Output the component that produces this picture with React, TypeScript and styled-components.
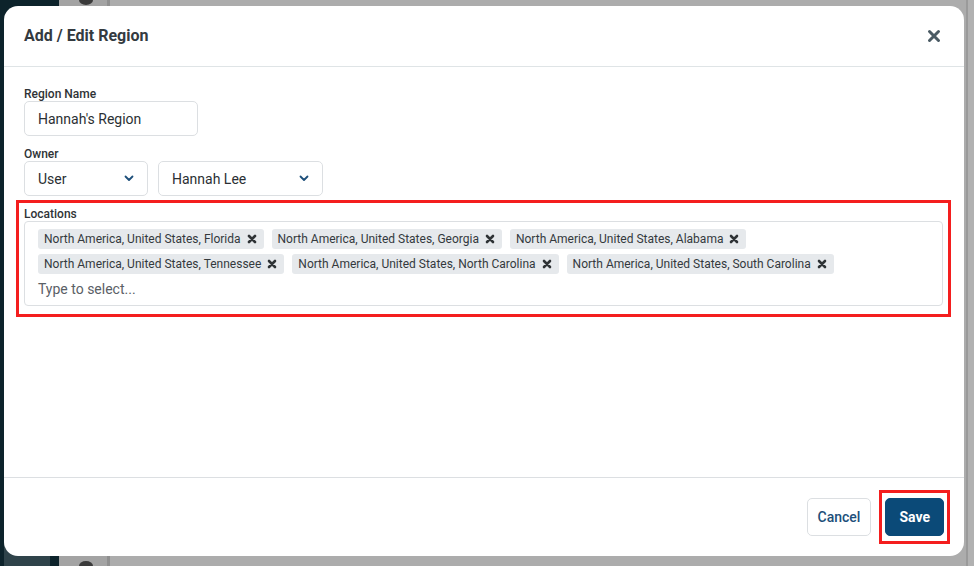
import React from "react";
import styled, { createGlobalStyle } from "styled-components";

const GlobalStyle = createGlobalStyle`
  html, body { margin: 0; padding: 0; }
  body { font-family: Roboto, "Liberation Sans", Arial, sans-serif; -webkit-font-smoothing: antialiased; }
  * { box-sizing: border-box; }
`;

const Page = styled.div`
  position: relative;
  width: 974px;
  height: 566px;
  overflow: hidden;
  display: flex;
`;

const Sidebar = styled.div`
  width: 59px;
  background: #0d232b;
  display: flex;
  flex-direction: column;
  justify-content: flex-end;
`;

const SidebarItem = styled.div`
  margin-left: 4px;
  width: 46px;
  height: 30px;
  background: #2f434a;
`;

const Rail = styled.div`
  width: 48px;
  background: #a3a3a3;
  display: flex;
  flex-direction: column;
  justify-content: space-between;
  align-items: center;
  padding-left: 6px;
`;

const RailDot = styled.div`
  width: 14px;
  height: 10px;
  border-radius: 50%;
  background: #3a3a3a;
  margin: -5px 0;
`;

const Divider = styled.div<{ $w: number; $c: string }>`
  width: ${(p) => p.$w}px;
  background: ${(p) => p.$c};
`;

const Main = styled.div`
  flex: 1;
  background: #acacac;
`;

const Modal = styled.div`
  position: absolute;
  left: 4px;
  top: 6px;
  width: 960px;
  height: 550px;
  background: #fff;
  border-radius: 14px;
  display: flex;
  flex-direction: column;
  overflow: hidden;
`;

const Header = styled.div`
  height: 61px;
  flex-shrink: 0;
  display: flex;
  align-items: center;
  justify-content: space-between;
  padding: 0 22px 0 20px;
  border-bottom: 1px solid #dfe4e6;
`;

const Title = styled.h2`
  margin: -1px 0 0 0;
  font-size: 16px;
  font-weight: 700;
  color: #343a3f;
  line-height: 20px;
`;

const CloseButton = styled.button`
  border: 0;
  background: none;
  padding: 0;
  width: 16px;
  height: 16px;
  display: flex;
  align-items: center;
  justify-content: center;
  cursor: pointer;
`;

const Body = styled.div`
  flex: 1;
  padding: 20px 21px 0 20px;
  display: flex;
  flex-direction: column;
`;

const Label = styled.label`
  display: block;
  font-size: 12px;
  line-height: 14px;
  font-weight: 500;
  color: #2f3336;
`;

const Field = styled.div<{ $mt?: number }>`
  margin-top: ${(p) => p.$mt ?? 0}px;
  display: flex;
  flex-direction: column;
`;

const TextInput = styled.div`
  width: 174px;
  height: 35px;
  border: 1px solid #dcdfe2;
  border-radius: 5px;
  display: flex;
  align-items: center;
  padding-left: 13px;
  font-size: 14px;
  color: #2b2f33;
`;

const Row = styled.div`
  display: flex;
  gap: 10px;
`;

const Select = styled.div<{ $w: number }>`
  width: ${(p) => p.$w}px;
  height: 35px;
  border: 1px solid #dcdfe2;
  border-radius: 5px;
  display: flex;
  align-items: center;
  justify-content: space-between;
  padding: 0 13px 0 13px;
  font-size: 14px;
  color: #2b2f33;
`;

const Highlight = styled.div<{ $mt?: number }>`
  margin-top: ${(p) => p.$mt ?? 0}px;
  border: 3px solid #f41e1e;
  margin-left: -8px;
  margin-right: -8px;
  padding: 4px 5px 8px 5px;
`;

const TagBox = styled.div`
  border: 1px solid #dcdfe2;
  border-radius: 4px;
  padding: 7px 13px 6px 13px;
  display: flex;
  flex-direction: column;
`;

const TagList = styled.div`
  display: flex;
  flex-wrap: wrap;
  gap: 5px 8px;
`;

const Tag = styled.span`
  height: 20px;
  display: inline-flex;
  align-items: center;
  gap: 6px;
  padding: 0 7px 0 6px;
  background: #e6e9ec;
  border-radius: 3px;
  font-size: 12px;
  color: #34393d;
  white-space: nowrap;
`;

const Placeholder = styled.div`
  height: 20px;
  margin-top: 5px;
  display: flex;
  align-items: center;
  font-size: 14px;
  color: #5a6066;
`;

const Footer = styled.div`
  height: 79px;
  flex-shrink: 0;
  border-top: 1px solid #dcdfe2;
  display: flex;
  align-items: center;
  justify-content: flex-end;
  gap: 8px;
  padding-right: 14px;
`;

const Button = styled.button<{ $primary?: boolean }>`
  height: 38px;
  border-radius: 5px;
  font-family: inherit;
  font-size: 14px;
  cursor: pointer;
  border: 1px solid ${(p) => (p.$primary ? "#0b4a78" : "#dcdfe2")};
  background: ${(p) => (p.$primary ? "#0b4a78" : "#fff")};
  color: ${(p) => (p.$primary ? "#fff" : "#1d4f7a")};
  font-weight: ${(p) => (p.$primary ? 700 : 500)};
  padding: 0 ${(p) => (p.$primary ? 13 : 10)}px;
`;

const ButtonHighlight = styled.div`
  border: 3px solid #f41e1e;
  padding: 5px 3px;
  display: flex;
`;

const TagX = () => (
  <svg width="10" height="10" viewBox="0 0 10 10">
    <path d="M2 2 L8 8 M8 2 L2 8" stroke="#2f3336" strokeWidth="2.6" strokeLinecap="round" />
  </svg>
);

const Chevron = () => (
  <svg width="10" height="7" viewBox="0 0 10 7">
    <path d="M1.5 1.5 L5 5 L8.5 1.5" stroke="#1d4f7a" strokeWidth="1.8" fill="none" strokeLinecap="round" strokeLinejoin="round" />
  </svg>
);

const locations = [
  "North America, United States, Florida",
  "North America, United States, Georgia",
  "North America, United States, Alabama",
  "North America, United States, Tennessee",
  "North America, United States, North Carolina",
  "North America, United States, South Carolina",
];

export default function App() {
  return (
    <>
      <GlobalStyle />
      <Page>
        <Sidebar>
          <SidebarItem />
        </Sidebar>
        <Rail>
          <RailDot />
          <RailDot />
        </Rail>
        <Divider $w={3} $c="#8f8f8f" />
        <Main />
        <Divider $w={2} $c="#9a9a9a" />
        <Divider $w={6} $c="#b1b1b1" />
        <Modal>
          <Header>
            <Title>Add / Edit Region</Title>
            <CloseButton aria-label="Close">
              <svg width="14" height="14" viewBox="0 0 14 14">
                <path d="M2.5 2.5 L11.5 11.5 M11.5 2.5 L2.5 11.5" stroke="#4b5b64" strokeWidth="3" strokeLinecap="round" />
              </svg>
            </CloseButton>
          </Header>
          <Body>
            <Field>
              <Label>Region Name</Label>
              <TextInput>Hannah's Region</TextInput>
            </Field>
            <Field $mt={11}>
              <Label>Owner</Label>
              <Row>
                <Select $w={124}>
                  User
                  <Chevron />
                </Select>
                <Select $w={165}>
                  Hannah Lee
                  <Chevron />
                </Select>
              </Row>
            </Field>
            <Highlight $mt={4}>
              <Label>Locations</Label>
              <TagBox>
                <TagList>
                  {locations.map((l) => (
                    <Tag key={l}>
                      {l}
                      <TagX />
                    </Tag>
                  ))}
                </TagList>
                <Placeholder>Type to select...</Placeholder>
              </TagBox>
            </Highlight>
          </Body>
          <Footer>
            <Button>Cancel</Button>
            <ButtonHighlight>
              <Button $primary>Save</Button>
            </ButtonHighlight>
          </Footer>
        </Modal>
      </Page>
    </>
  );
}
